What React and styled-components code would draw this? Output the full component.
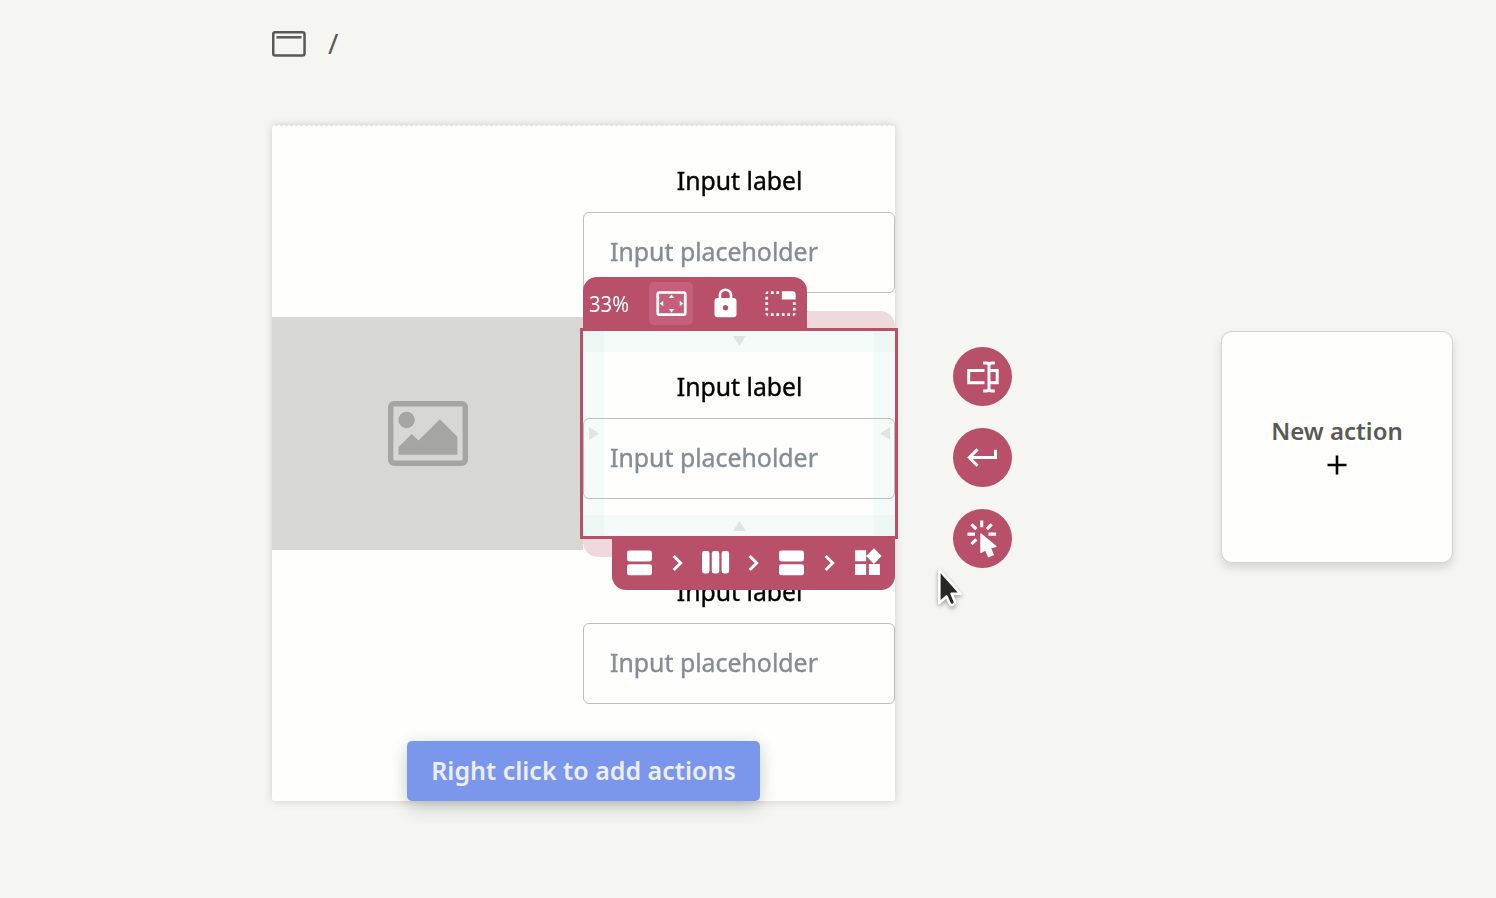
import React from "react";
import styled, { createGlobalStyle } from "styled-components";
import { MdSettingsOverscan, MdLock, MdTabUnselected, MdWidgets } from "react-icons/md";

const GlobalStyle = createGlobalStyle`
  * { box-sizing: border-box; }
  body {
    margin: 0;
    background: #f5f6f2;
    font-family: "Noto Sans", "Open Sans", sans-serif;
  }
  svg { display: block; flex: none; }
`;

const Page = styled.div`
  width: 1496px;
  height: 898px;
  overflow: hidden;
  background: #f5f6f2;
`;

const Header = styled.header`
  display: flex;
  align-items: center;
  gap: 22px;
  height: 125px;
  padding: 0 0 37px 272px;
  color: #585a56;
  font-size: 28px;
  line-height: 34px;
`;

const Slash = styled.span`
  padding-bottom: 2px;
`;

const Workspace = styled.main`
  display: flex;
  align-items: flex-start;
  padding-left: 272px;
`;

const Frame = styled.section`
  width: 623px;
  height: 676px;
  background: #fefffc;
  border-top: 1px dashed #e6e7e3;
  border-radius: 3px;
  box-shadow: 0 0 9px rgba(70, 75, 65, 0.22);
`;

const Columns = styled.div`
  display: flex;
  align-items: center;
  height: 615px;
`;

const ImageBlock = styled.div`
  display: flex;
  align-items: center;
  justify-content: center;
  width: 311px;
  height: 233px;
  margin-bottom: 1px;
  background: #d7d8d4;
`;

const Fields = styled.div`
  width: 312px;
`;

const Field = styled.div`
  position: relative;
  height: 205.5px;
  padding-top: 36px;
`;

const Text = styled.span`
  display: inline-block;
  white-space: nowrap;
  transform: scaleX(${(p) => p.$fit || 1});
  transform-origin: ${(p) => p.$origin || "center"};
`;

const Label = styled.div`
  position: relative;
  height: 51px;
  padding-left: 1px;
  line-height: 38px;
  text-align: center;
  color: #000;
  font-size: 25.5px;
  -webkit-text-stroke: 0.4px #000;
`;

const Input = styled.div`
  position: relative;
  display: flex;
  align-items: center;
  height: 81px;
  padding: 0 0 3px 26px;
  border: 1px solid #bdbfbc;
  border-radius: 6px;
  color: #858c98;
  font-size: 25.5px;
  -webkit-text-stroke: 0.4px #858c98;
`;

const MarginArea = styled.div`
  position: absolute;
  inset: -20px 0 -21px 0;
  border-radius: 15px;
  background: #eed9dd;
`;

const PaddingArea = styled.div`
  position: absolute;
  inset: 0;
  background:
    linear-gradient(rgba(222, 241, 239, 0.33), rgba(222, 241, 239, 0.33)) top / 100% 21px no-repeat,
    linear-gradient(rgba(222, 241, 239, 0.33), rgba(222, 241, 239, 0.33)) bottom / 100% 21px no-repeat,
    linear-gradient(rgba(222, 241, 239, 0.33), rgba(222, 241, 239, 0.33)) left / 21px 100% no-repeat,
    linear-gradient(rgba(222, 241, 239, 0.33), rgba(222, 241, 239, 0.33)) right / 21px 100% no-repeat,
    #fefffc;
`;

const SelectionOutline = styled.div`
  position: absolute;
  inset: -3px -3px -3px -3px;
  border: 3px solid #b8506a;
  z-index: 2;
`;

const Handle = styled.svg`
  position: absolute;
  fill: #e2e4e1;
  ${(p) => p.$place}
`;

const TopToolbar = styled.div`
  position: absolute;
  left: 0;
  bottom: 205px;
  z-index: 3;
  display: flex;
  align-items: center;
  width: 224px;
  height: 54px;
  padding: 0 0 1px 6px;
  border-radius: 14px 14px 0 0;
  background: #b8506a;
  color: #fff;
`;

const Zoom = styled.div`
  width: 60px;
  padding-bottom: 2px;
  font-size: 22px;
  line-height: 30px;
`;

const ToolButton = styled.div`
  display: flex;
  align-items: center;
  justify-content: center;
  width: 44px;
  height: 43px;
  margin-right: ${(p) => p.$gap || 0}px;
  border-radius: 5px;
  background: ${(p) => (p.$active ? "#c4607a" : "transparent")};
`;

const Breadcrumb = styled.div`
  position: absolute;
  right: 0;
  top: 205px;
  z-index: 3;
  display: grid;
  grid-template-columns: repeat(7, 38px);
  align-items: center;
  justify-items: center;
  width: 283px;
  height: 54px;
  padding: 0 8px 0 8.5px;
  border-radius: 0 0 14px 14px;
  background: #b8506a;
`;

const ButtonRow = styled.div`
  display: flex;
  justify-content: center;
`;

const PrimaryButton = styled.div`
  position: relative;
  display: flex;
  align-items: center;
  justify-content: center;
  width: 353px;
  height: 60px;
  padding-bottom: 2px;
  border-radius: 5px;
  background: #7b97ec;
  color: #eceef2;
  font-size: 25px;
  font-weight: 600;
  box-shadow: 0 7px 18px rgba(40, 45, 40, 0.2), 0 0 16px rgba(40, 45, 40, 0.06);
`;

const SideActions = styled.div`
  display: flex;
  flex-direction: column;
  gap: 22px;
  margin: 222px 0 0 58px;
`;

const RoundButton = styled.div`
  display: flex;
  align-items: center;
  justify-content: center;
  width: 59px;
  height: 59px;
  border-radius: 50%;
  background: #b8506a;
`;

const NewAction = styled.div`
  display: flex;
  flex-direction: column;
  align-items: center;
  gap: 6px;
  width: 232px;
  height: 232px;
  margin: 206px 0 0 209px;
  padding-top: 81px;
  border: 1px solid #d4d6d2;
  border-radius: 11px;
  background: #fefffc;
  color: #585a56;
  font-size: 24px;
  font-weight: 600;
  line-height: 36px;
  box-shadow: 0 5px 9px rgba(60, 65, 55, 0.16);
`;

const Pointer = styled.svg`
  position: absolute;
  left: 930px;
  top: 559px;
  filter: drop-shadow(0 2px 2px rgba(0, 0, 0, 0.35));
`;

const Triangle = ({ d, w, h, place }) => (
  <Handle width={w} height={h} viewBox={`0 0 ${w} ${h}`} $place={place}>
    <path d={d} />
  </Handle>
);

const RowsIcon = () => (
  <svg width="25" height="26" viewBox="0 0 25 26" fill="#fff">
    <rect y="0.5" width="25" height="11" rx="2.4" />
    <rect y="14.3" width="25" height="11" rx="2.4" />
  </svg>
);

const ColumnsIcon = () => (
  <svg width="28" height="23" viewBox="0 0 28 23" fill="#fff">
    <rect x="0" width="7.5" height="22.5" rx="2.4" />
    <rect x="9.8" width="7.5" height="22.5" rx="2.4" />
    <rect x="19.6" width="7.5" height="22.5" rx="2.4" />
  </svg>
);

const Chevron = () => (
  <svg width="12" height="18" viewBox="0 0 12 18" fill="none" stroke="#fff" strokeWidth="2.9">
    <path d="M1.700 2l7 7-7 7" />
  </svg>
);

function FieldContent() {
  return (
    <>
      <Label><Text $fit={0.972}>Input label</Text></Label>
      <Input><Text $fit={0.975} $origin="left">Input placeholder</Text></Input>
    </>
  );
}

function SelectedField() {
  return (
    <Field>
      <MarginArea />
      <PaddingArea />
      <FieldContent />
      <SelectionOutline />
      <Triangle w={13} h={10} d="M0 0h13L6.5 10z" place="left: 150px; top: 5px;" />
      <Triangle w={13} h={10} d="M0 10h13L6.5 0z" place="left: 150px; bottom: 5px;" />
      <Triangle w={10} h={13} d="M0 0v13l10-6.5z" place="left: 6px; top: 96px;" />
      <Triangle w={10} h={13} d="M10 0v13L0 6.5z" place="right: 5px; top: 96px;" />
      <TopToolbar>
        <Zoom><Text $fit={0.92} $origin="left">33%</Text></Zoom>
        <ToolButton $active $gap={10}><MdSettingsOverscan size={33} /></ToolButton>
        <ToolButton $gap={11}><MdLock size={33} /></ToolButton>
        <ToolButton><MdTabUnselected size={33} /></ToolButton>
      </TopToolbar>
      <Breadcrumb>
        <RowsIcon />
        <Chevron />
        <ColumnsIcon />
        <Chevron />
        <RowsIcon />
        <Chevron />
        <MdWidgets size={33} color="#fff" />
      </Breadcrumb>
    </Field>
  );
}

export default function App() {
  return (
    <Page>
      <GlobalStyle />
      <Header>
        <svg width="34" height="26" viewBox="0 0 34 26" fill="none" stroke="#585a56" strokeWidth="2.5">
          <rect x="1.25" y="1.25" width="31.3" height="23.3" rx="2" />
          <path d="M4.5 6.3h25" />
        </svg>
        <Slash>/</Slash>
      </Header>
      <Workspace>
        <Frame>
          <Columns>
            <ImageBlock>
              <svg width="80" height="65" viewBox="0 0 80 65" fill="#a5a6a1">
                <rect x="2.7" y="2.7" width="74.6" height="59.6" rx="3.5" fill="none" stroke="#a5a6a1" strokeWidth="5.4" />
                <circle cx="18.6" cy="19" r="8.2" />
                <path d="M10.5 53.8v-7.9l13.3-13 6.7 6.6 21.3-21.3 17.6 17.6v18z" />
              </svg>
            </ImageBlock>
            <Fields>
              <Field><FieldContent /></Field>
              <SelectedField />
              <Field><FieldContent /></Field>
            </Fields>
          </Columns>
          <ButtonRow>
            <PrimaryButton><Text>Right click to add actions</Text></PrimaryButton>
          </ButtonRow>
        </Frame>
        <SideActions>
          <RoundButton>
            <svg width="34" height="34" viewBox="0 0 34 34" fill="none" stroke="#fff" strokeWidth="3">
              <path d="M18.500 10.500H2.700v12.200h15.800M23 10.500h8.200v12.200H23M17.200 2.900h3q2.800 0 2.800 2.500v23.200q0 2.500-2.800 2.500h-3M28.800 2.900h-3q-2.800 0-2.800 2.500M28.800 31.100h-3q-2.800 0-2.800-2.500" />
            </svg>
          </RoundButton>
          <RoundButton>
            <svg width="34" height="34" viewBox="0 0 34 34" fill="none" stroke="#fff" strokeWidth="3">
              <path d="M29.500 8.800v7.800H4M11.500 8.400L3.300 16.600l8.200 8.200" />
            </svg>
          </RoundButton>
          <RoundButton>
            <svg width="34" height="38" viewBox="0 0 34 38" fill="#fff">
              <path
                d="M15.700 0.500v6.800M1.500 14.100h7.500M22.500 14.100h7.600M5.500 4.300l4.800 4.800M25.700 4.300l-4.800 4.800M5.500 24.100l4.800-4.800"
                fill="none"
                stroke="#fff"
                strokeWidth="3.100"
              />
              <path
                d="M14.900 14V32.500L19.500 30L22.600 36.800L27.300 34.700L24.400 28L30 26.500Z"
                stroke="#fff"
                strokeWidth="1.200"
                strokeLinejoin="round"
              />
            </svg>
          </RoundButton>
        </SideActions>
        <NewAction>
          <Text>New action</Text>
          <svg width="20" height="20" viewBox="0 0 20 20" stroke="#000" strokeWidth="2.600">
            <path d="M10 .5v19M.5 10h19" />
          </svg>
        </NewAction>
      </Workspace>
      <Pointer width="40" height="52" viewBox="0 0 40 52">
        <path
          d="M9.300 10.800V44L16.500 37.500L19.900 45Q20.900 46.700 23.300 45.600Q25.600 44.500 24.900 42.600L21.600 34.700H30.500Z"
          fill="#272826"
          stroke="#fff"
          strokeWidth="2.600"
          strokeLinejoin="round"
        />
      </Pointer>
    </Page>
  );
}
